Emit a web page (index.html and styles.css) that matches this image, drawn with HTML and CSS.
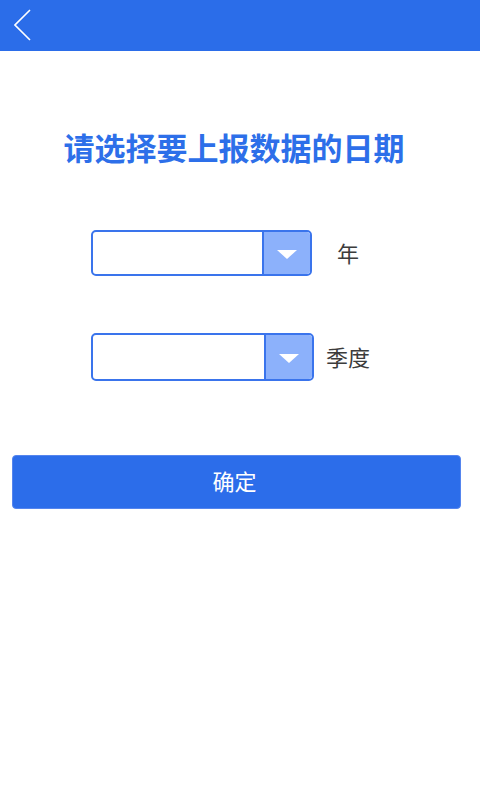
FILE: index.html
```html
<!DOCTYPE html>
<html lang="zh-CN">
<head>
<meta charset="utf-8">
<title>选择日期</title>
<link rel="stylesheet" href="styles.css">
</head>
<body>
<header class="topbar">
  <svg class="back" width="20" height="34" viewBox="0 0 20 34"><polyline points="16,1 1,16 16,31" fill="none" stroke="#fff" stroke-width="1.6"/></svg>
</header>
<main class="content">
  <h1 class="title">请选择要上报数据的日期</h1>
  <div class="row row-year">
    <div class="select sel-year">
      <div class="field"></div>
      <div class="arrow"><span class="tri"></span></div>
    </div>
    <span class="label label-year">年</span>
  </div>
  <div class="row row-quarter">
    <div class="select sel-quarter">
      <div class="field"></div>
      <div class="arrow"><span class="tri"></span></div>
    </div>
    <span class="label label-quarter">季度</span>
  </div>
  <button class="confirm">确定</button>
</main>
</body>
</html>
```
FILE: styles.css
```css
html, body {
  margin: 0;
  padding: 0;
  background: #fff;
  font-family: "Noto Sans CJK SC", "Noto Sans", sans-serif;
}
.topbar {
  height: 51px;
  background: #2b6de9;
  display: flex;
  align-items: center;
  padding-left: 14px;
}
.back {
  display: block;
  margin-top: 1px;
}
.content {
  display: flex;
  flex-direction: column;
}
.title {
  margin: 77px 0 0 0;
  padding-right: 12px;
  font-size: 31px;
  line-height: 38px;
  font-weight: 700;
  color: #2d6fe9;
  text-align: center;
  letter-spacing: 0;
  white-space: nowrap;
}
.row {
  display: flex;
  align-items: center;
  padding-left: 91px;
}
.row-year {
  margin-top: 64px;
}
.row-quarter {
  margin-top: 57px;
}
.select {
  display: flex;
  box-sizing: border-box;
  border: 2px solid #3a74ec;
  border-radius: 5px;
  overflow: hidden;
  background: #fff;
}
.sel-year {
  width: 221px;
  height: 46px;
}
.sel-quarter {
  width: 223px;
  height: 48px;
}
.field {
  flex: 1;
}
.arrow {
  width: 46px;
  background: #8cb1fb;
  border-left: 2px solid #3a74ec;
  display: flex;
  align-items: center;
  justify-content: center;
}
.tri {
  width: 0;
  height: 0;
  border-left: 10px solid transparent;
  border-right: 10px solid transparent;
  border-top: 9px solid #fff;
  margin-top: 2px;
}
.label {
  font-size: 22px;
  color: #3c3c3c;
  line-height: 30px;
  padding-bottom: 3px;
}
.label-year {
  margin-left: 25px;
}
.label-quarter {
  margin-left: 12px;
}
.confirm {
  margin: 74px 0 0 12px;
  width: 449px;
  height: 54px;
  box-sizing: border-box;
  background: #2c6dea;
  border: 1px solid #5585ee;
  border-radius: 4px;
  color: #fff;
  font-family: "Noto Sans CJK SC", "Noto Sans", sans-serif;
  font-size: 22px;
  padding: 0 4px 4px 0;
  cursor: pointer;
}
```
